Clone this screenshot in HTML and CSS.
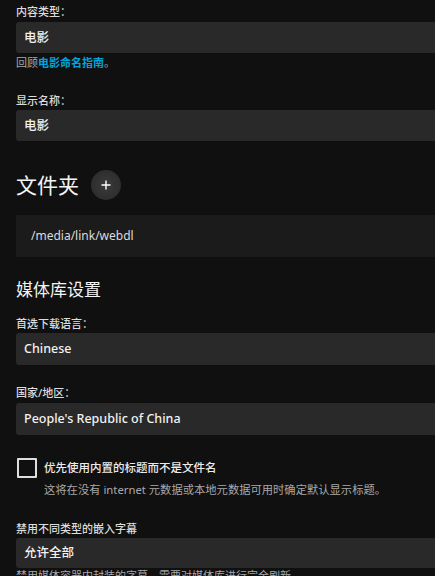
FILE: index.html
```html
<!DOCTYPE html>
<html lang="zh-CN">
<head>
<meta charset="utf-8">
<title>媒体库</title>
<link rel="stylesheet" href="styles.css">
</head>
<body>
<div class="page">
  <div class="field first">
    <div class="label">内容类型：</div>
    <div class="input">电影</div>
    <div class="help">回顾<a class="link" href="#">电影命名指南</a>。</div>
  </div>

  <div class="field f2">
    <div class="label">显示名称：</div>
    <div class="input">电影</div>
  </div>

  <div class="heading-row">
    <h2 class="heading">文件夹</h2>
    <button class="add-btn" type="button" aria-label="添加">
      <svg width="10" height="10" viewBox="0 0 10 10"><path d="M5 0.5V9.5M0.5 5H9.5" stroke="#ffffff" stroke-width="1.4" fill="none"/></svg>
    </button>
  </div>

  <div class="folder">/media/link/webdl</div>

  <h3 class="subheading">媒体库设置</h3>

  <div class="field f3">
    <div class="label">首选下载语言：</div>
    <div class="input tall">Chinese</div>
  </div>

  <div class="field f4">
    <div class="label">国家/地区：</div>
    <div class="input tall">People's Republic of China</div>
  </div>

  <div class="check-row">
    <span class="checkbox"></span>
    <div class="check-text">
      <div class="check-label">优先使用内置的标题而不是文件名</div>
      <div class="check-desc">这将在没有 internet 元数据或本地元数据可用时确定默认显示标题。</div>
    </div>
  </div>

  <div class="field f5">
    <div class="label">禁用不同类型的嵌入字幕</div>
    <div class="input short">允许全部</div>
    <div class="help last">禁用媒体容器内封装的字幕。需要对媒体库进行完全刷新。</div>
  </div>
</div>
</body>
</html>
```

FILE: styles.css
```css
html, body {
  margin: 0;
  padding: 0;
  background: #101010;
  height: 100%;
  overflow: hidden;
}

body {
  font-family: "Noto Sans", "Noto Sans CJK SC", sans-serif;
  color: #ffffff;
}

.page {
  padding: 5px 0 0 16px;
}

.label {
  font-size: 11px;
  line-height: 14px;
  height: 14px;
  font-weight: 500;
  color: #dcdcdc;
  margin-bottom: 3px;
}

.input {
  height: 31px;
  line-height: 31px;
  background: #292929;
  border-radius: 3px 0 0 3px;
  padding-left: 8px;
  font-size: 12.5px;
  font-weight: 500;
  color: #f2f2f2;
}

.input.tall {
  height: 32px;
  line-height: 32px;
}

.input.short {
  height: 30px;
  line-height: 30px;
}

.help {
  margin-top: 3px;
  font-size: 11px;
  line-height: 14px;
  color: #a8a8a8;
  white-space: nowrap;
}

.help.last {
  margin-top: 2px;
  line-height: 12px;
}

.link {
  color: #00a4dc;
  text-decoration: none;
  font-weight: 600;
}

.f2 { margin-top: 24px; }
.f2 .label { margin-bottom: 2px; }

.heading-row {
  margin-top: 29px;
  display: flex;
  align-items: center;
  height: 30px;
}

.heading {
  margin: 0;
  font-size: 21px;
  line-height: 30px;
  font-weight: 400;
  color: #f4f4f4;
}

.add-btn {
  margin-left: 12px;
  width: 30px;
  height: 30px;
  border-radius: 50%;
  border: none;
  padding: 0;
  background: radial-gradient(circle, #3a3a3a 0%, #2e2e2e 70%, #292929 100%);
  display: flex;
  align-items: center;
  justify-content: center;
}

.add-btn svg { display: block; }

.folder {
  margin-top: 15px;
  height: 42px;
  line-height: 42px;
  background: #1b1b1b;
  padding-left: 15px;
  font-size: 12px;
  color: #dcdcdc;
}

.subheading {
  margin: 21px 0 0 0;
  font-size: 17px;
  line-height: 24px;
  font-weight: 400;
  color: #f4f4f4;
}

.f3 { margin-top: 15px; }
.f3 .label { margin-bottom: 2px; }

.f4 { margin-top: 21px; }

.check-row {
  margin-top: 23px;
  display: flex;
  align-items: flex-start;
}

.checkbox {
  flex: none;
  width: 16px;
  height: 16px;
  border: 2px solid #dedede;
  border-radius: 1px;
  margin-left: 1px;
}

.check-text {
  margin-left: 7px;
  padding-top: 2px;
}

.check-label {
  font-size: 11.5px;
  line-height: 16px;
  font-weight: 500;
  color: #ececec;
}

.check-desc {
  margin-top: 7px;
  font-size: 11.3px;
  line-height: 14px;
  color: #a8a8a8;
  white-space: nowrap;
}

.f5 { margin-top: 25px; }
.f5 .label { margin-bottom: 2px; }
```
